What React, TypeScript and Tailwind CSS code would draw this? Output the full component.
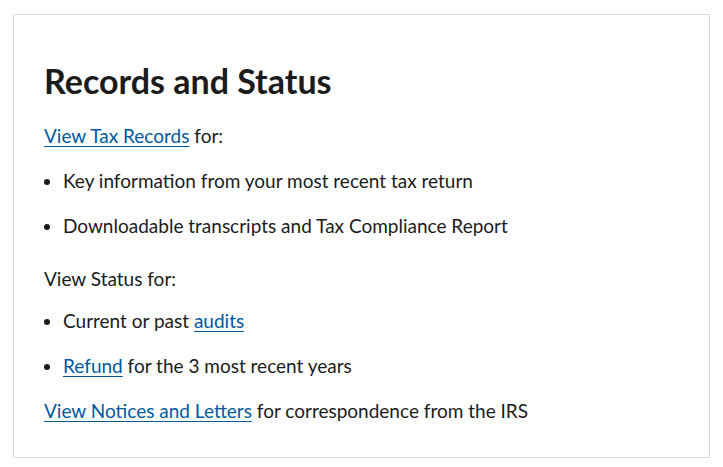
import React from "react";

const link = "text-[#00599c] underline underline-offset-[3px] decoration-[1px]";

export default function App() {
  return (
    <div className="bg-white w-[723px] h-[467px] pt-[14px] pl-[13px]" style={{ fontFamily: "Lato, 'Noto Sans', sans-serif" }}>
      <div className="w-[697px] h-[444px] border border-[#dcdcdc] pl-[30px] pt-[46px] text-[19px] leading-[27px] text-[#1b1b1b]">
        <h2 className="text-[34px] leading-[40px] font-bold text-[#1b1b1b]">Records and Status</h2>
        <p className="mt-[21px]">
          <a href="#" className={link}>View Tax Records</a> for:
        </p>
        <ul className="mt-[18px] flex flex-col gap-[18px] list-disc pl-[19px]">
          <li>Key information from your most recent tax return</li>
          <li>Downloadable transcripts and Tax Compliance Report</li>
        </ul>
        <p className="mt-[26px]">View Status for:</p>
        <ul className="mt-[15px] flex flex-col gap-[18px] list-disc pl-[19px]">
          <li>
            Current or past <a href="#" className={link}>audits</a>
          </li>
          <li>
            <a href="#" className={link}>Refund</a> for the 3 most recent years
          </li>
        </ul>
        <p className="mt-[18px]">
          <a href="#" className={link}>View Notices and Letters</a> for correspondence from the IRS
        </p>
      </div>
    </div>
  );
}
